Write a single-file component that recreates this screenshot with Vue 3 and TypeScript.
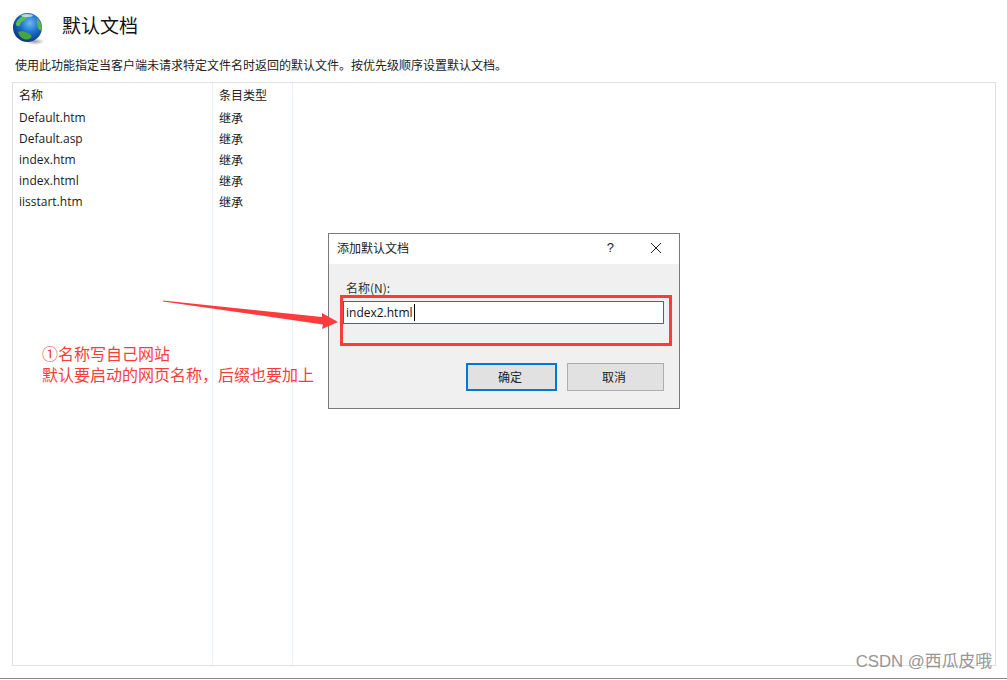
<script setup lang="ts">
interface Row { name: string; type: string }
const rows: Row[] = [
  { name: 'Default.htm', type: '继承' },
  { name: 'Default.asp', type: '继承' },
  { name: 'index.htm', type: '继承' },
  { name: 'index.html', type: '继承' },
  { name: 'iisstart.htm', type: '继承' },
]
</script>

<template>
  <div class="page">
    <header class="head">
      <svg class="globe" width="32" height="34" viewBox="0 0 32 34">
        <defs>
          <radialGradient id="sea" cx="0.58" cy="0.35" r="0.68">
            <stop offset="0" stop-color="#6fb9ee" />
            <stop offset="0.45" stop-color="#1f74d0" />
            <stop offset="1" stop-color="#0a2f86" />
          </radialGradient>
          <radialGradient id="shade" cx="0.5" cy="0.5" r="0.5">
            <stop offset="0" stop-color="#666" stop-opacity="0.65" />
            <stop offset="1" stop-color="#777" stop-opacity="0" />
          </radialGradient>
        </defs>
        <ellipse cx="23" cy="29.5" rx="9.5" ry="3.5" fill="url(#shade)" />
        <circle cx="15.5" cy="15.5" r="14.5" fill="url(#sea)" />
        <path d="M5 9 Q10 3 15 2 Q18 3 15 5 Q13 9 9 10 Q8 15 5 14 Q3 12 5 9Z" fill="#5cc04c" />
        <path d="M25 6 Q30 11 30 17 Q28 20 26 16 Q24 11 25 6Z" fill="#5cb644" />
        <path d="M6 20 Q11 18 16 21 Q21 23 19 26 Q14 29 10 26 Q7 24 6 20Z" fill="#46a638" />
        <ellipse cx="15" cy="3.6" rx="6" ry="1.6" fill="#d8eefc" opacity="0.75" />
      </svg>
      <h1 class="title">默认文档</h1>
    </header>
    <p class="desc">使用此功能指定当客户端未请求特定文件名时返回的默认文件。按优先级顺序设置默认文档。</p>
    <section class="list">
      <div class="col col-name">
        <div class="col-head">名称</div>
        <div v-for="r in rows" :key="r.name" class="cell">{{ r.name }}</div>
      </div>
      <div class="col col-type">
        <div class="col-head">条目类型</div>
        <div v-for="r in rows" :key="r.name" class="cell">{{ r.type }}</div>
      </div>
    </section>
    <div class="foot-line"></div>

    <div class="dialog">
      <div class="dlg-title">
        <span class="dlg-caption">添加默认文档</span>
        <span class="dlg-help">?</span>
        <svg class="dlg-close" width="12" height="12" viewBox="0 0 12 12">
          <path d="M1 1L11 11M11 1L1 11" stroke="#222" stroke-width="1" fill="none" />
        </svg>
      </div>
      <div class="dlg-body">
        <div class="dlg-label">名称(N):</div>
        <div class="dlg-input">index2.html<span class="caret"></span></div>
        <div class="dlg-actions">
          <button class="btn btn-primary">确定</button>
          <button class="btn">取消</button>
        </div>
      </div>
    </div>

    <div class="red-box"></div>
    <svg class="arrow" width="180" height="40" viewBox="0 0 180 40">
      <polygon points="0,0.5 159,17 159,13 175,22 159,29 160,24.5 0,1.5" fill="#fb3c3c" />
    </svg>
    <div class="note">
      <div>①名称写自己网站</div>
      <div>默认要启动的网页名称，后缀也要加上</div>
    </div>
    <div class="mark">CSDN @西瓜皮哦</div>
  </div>
</template>

<style scoped>
.page {
  position: relative;
  width: 1007px;
  height: 680px;
  overflow: hidden;
  background: #fff;
  color: #1a1a1a;
  font-family: "Noto Sans CJK SC", "Liberation Sans", sans-serif;
  font-size: 12px;
  box-sizing: border-box;
  padding: 12px 12px 0;
  display: flex;
  flex-direction: column;
}
.head {
  display: flex;
  align-items: flex-start;
  height: 32px;
  gap: 18px;
  flex: none;
}
.globe { flex: none; }
.title {
  margin: 0;
  font-size: 19px;
  font-weight: 400;
  line-height: 26px;
  color: #111;
}
.desc {
  margin: 11px 0 0 3px;
  line-height: 20px;
  height: 20px;
  flex: none;
  font-size: 12px;
  color: #222;
}
.list {
  margin-top: 7px;
  width: 984px;
  height: 584px;
  box-sizing: border-box;
  border: 1px solid #e1e1e1;
  display: flex;
  flex: none;
}
.col { box-sizing: border-box; border-right: 1px solid #e8eff8; }
.col-name { width: 200px; }
.col-type { width: 80px; }
.col-head {
  height: 24px;
  line-height: 23px;
  padding-left: 6px;
  color: #222;
}
.cell {
  height: 21px;
  line-height: 21px;
  padding-left: 6px;
  font-family: "Open Sans", "Noto Sans CJK SC", sans-serif;
  font-size: 12px;
  color: #1a1a1a;
}
.col-type .cell { font-family: "Noto Sans CJK SC", sans-serif; }
.foot-line {
  position: absolute;
  left: 0;
  right: 0;
  top: 678px;
  height: 1px;
  background: #8a8a8a;
}
.dialog {
  position: absolute;
  left: 328px;
  top: 233px;
  width: 352px;
  height: 176px;
  box-sizing: border-box;
  border: 1px solid #7a7a7a;
  background: #f0f0f0;
  display: flex;
  flex-direction: column;
}
.dlg-title {
  height: 30px;
  background: #fff;
  display: flex;
  align-items: flex-start;
  padding: 5px 17px 0 8px;
  box-sizing: border-box;
  flex: none;
  line-height: 18px;
}
.dlg-caption { flex: 1; color: #222; }
.dlg-help {
  margin-right: 36px;
  font-family: "Liberation Sans", sans-serif;
  font-size: 13px;
}
.dlg-close { display: block; margin-top: 3px; }
.dlg-body {
  flex: 1;
  padding: 14px 15px 0 14px;
  display: flex;
  flex-direction: column;
}
.dlg-label {
  padding-left: 3px;
  height: 23px;
  line-height: 20px;
  color: #333;
}
.dlg-input {
  height: 23px;
  box-sizing: border-box;
  border: 1px solid #0078d7;
  background: #fff;
  padding-left: 2px;
  line-height: 21px;
  font-family: "Open Sans", sans-serif;
  font-size: 12px;
  color: #111;
  display: flex;
  align-items: center;
}
.caret {
  display: inline-block;
  width: 1px;
  height: 17px;
  background: #000;
  margin-left: 1px;
}
.dlg-actions {
  margin-top: 39px;
  display: flex;
  justify-content: flex-end;
  gap: 10px;
}
.btn {
  width: 97px;
  height: 28px;
  box-sizing: border-box;
  border: 1px solid #adadad;
  background: #e1e1e1;
  padding: 0 3px 1px 0;
  font-family: "Noto Sans CJK SC", sans-serif;
  font-size: 12px;
  color: #222;
}
.btn-primary {
  width: 91px;
  border: 2px solid #0078d7;
}
.red-box {
  position: absolute;
  left: 340px;
  top: 295px;
  width: 332px;
  height: 51px;
  box-sizing: border-box;
  border: 3px solid #fb3c3c;
}
.arrow {
  position: absolute;
  left: 163px;
  top: 300px;
}
.note {
  position: absolute;
  left: 42px;
  top: 343px;
  color: #fb3c3c;
  font-size: 16px;
  line-height: 21px;
  white-space: nowrap;
}
.mark {
  position: absolute;
  right: 15px;
  top: 651px;
  font-family: "Liberation Sans", "Noto Sans CJK SC", sans-serif;
  font-size: 16.8px;
  line-height: 22px;
  color: #8c8c8c;
  opacity: 0.9;
}
</style>
